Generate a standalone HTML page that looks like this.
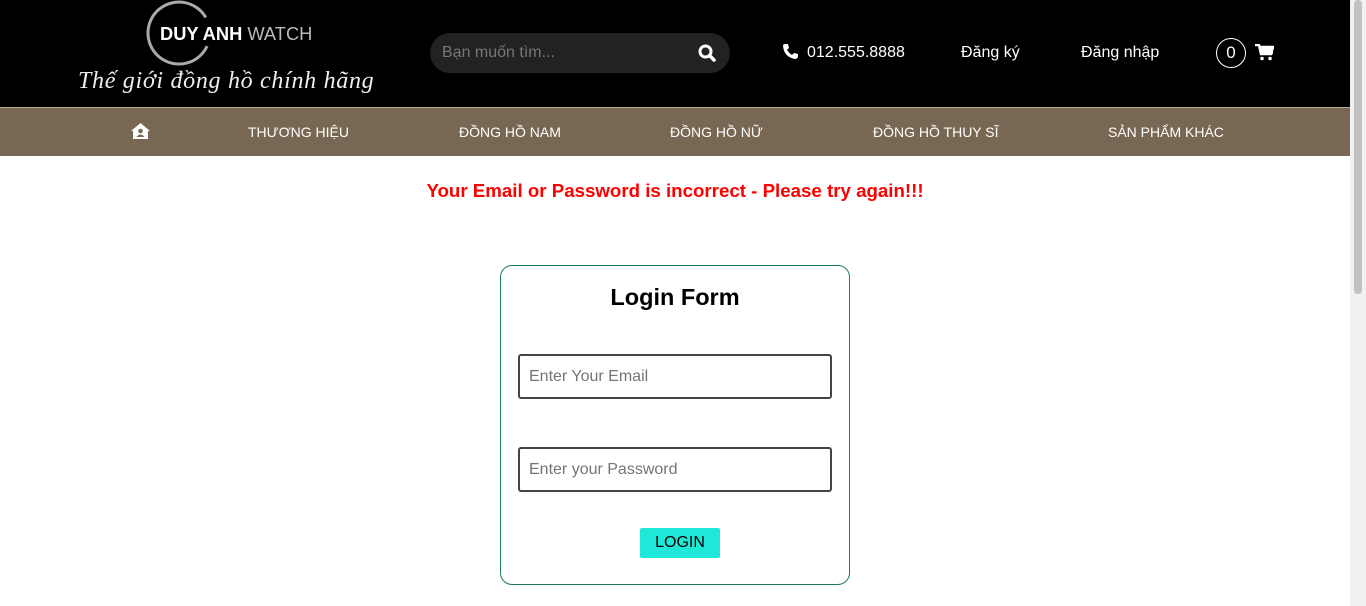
<!DOCTYPE html>
<html><head><meta charset="utf-8"><style>
*{margin:0;padding:0;box-sizing:border-box}
body{width:1366px;height:606px;overflow:hidden;background:#fff;font-family:"Liberation Sans",sans-serif;position:relative}
.hdr{position:absolute;left:0;top:0;width:1350px;height:107px;background:#000}
.nav{position:absolute;left:0;top:107px;width:1350px;height:49px;background:#786752;border-top:1px solid #b8aa98}
.nav span{position:absolute;top:16px;color:#fff;font-size:14px}
.sb{position:absolute;left:1350px;top:0;width:16px;height:606px;background:#f1f1f1}
.sb div{position:absolute;left:4px;top:0;width:8px;height:294px;background:#c1c1c1;border-radius:4px}
.w{position:absolute;color:#fff;font-size:16px}
</style></head><body>
<div class="hdr">
 <svg style="position:absolute;left:145px;top:0" width="70" height="70"><path d="M60.8 17.5 A31 31 0 1 0 62.1 46.1" fill="none" stroke="#aaa" stroke-width="3"/></svg>
 <div style="position:absolute;left:160px;top:23px;color:#fff;font-size:18.3px;font-weight:bold">DUY ANH <span style="font-weight:normal;color:#bbb">WATCH</span></div>
 <div style="position:absolute;left:78px;top:68px;color:#eee;font-family:'Liberation Serif',serif;font-style:italic;font-size:24px;letter-spacing:0.7px">Thế giới đồng hồ chính hãng</div>
 <div style="position:absolute;left:430px;top:33px;width:300px;height:40px;background:#222;border-radius:20px"></div>
 <div style="position:absolute;left:442px;top:44px;color:#777;font-size:16px">Bạn muốn tìm...</div>
 <svg style="position:absolute;left:698px;top:44px" width="18" height="18"><circle cx="7.5" cy="7.5" r="5.5" fill="none" stroke="#fff" stroke-width="3"/><path d="M11.5 11.5 L16 16" stroke="#fff" stroke-width="3.5" stroke-linecap="round"/></svg>
 <svg style="position:absolute;left:782px;top:43px" width="17" height="17" viewBox="0 0 17 17"><path d="M3 1 L6 1 L7 5 L5 7 Q7 10 10 12 L12 10 L16 11 L16 14 Q15 16 13 16 Q2 14 1 3 Q1 1 3 1Z" fill="#fff"/></svg>
 <div class="w" style="left:807px;top:44px">012.555.8888</div>
 <div class="w" style="left:961px;top:44px">Đăng ký</div>
 <div class="w" style="left:1081px;top:44px">Đăng nhập</div>
 <div style="position:absolute;left:1216px;top:38px;width:30px;height:30px;border:1px solid #fff;border-radius:50%;color:#fff;font-size:17px;text-align:center;line-height:28px">0</div>
 <svg style="position:absolute;left:1255px;top:44px" width="19" height="17" viewBox="0 0 19 17"><path d="M0 1 H4 L6 10 H16 L18 3 H5" fill="none" stroke="#fff" stroke-width="2.5"/><rect x="5" y="3" width="13" height="7" fill="#fff"/><circle cx="7" cy="14.5" r="1.8" fill="#fff"/><circle cx="15" cy="14.5" r="1.8" fill="#fff"/></svg>
</div>
<div class="nav">
 <svg style="position:absolute;left:131px;top:15px" width="19" height="16" viewBox="0 0 19 16"><path d="M9.5 0 L19 8 L17 8 L17 16 L2 16 L2 8 L0 8Z" fill="#fff"/><circle cx="9.5" cy="8" r="2.3" fill="#786752"/><path d="M5.5 14 Q9.5 9 13.5 14Z" fill="#786752"/></svg>
 <span style="left:248px">THƯƠNG HIỆU</span>
 <span style="left:459px">ĐỒNG HỒ NAM</span>
 <span style="left:670px">ĐỒNG HỒ NỮ</span>
 <span style="left:873px">ĐỒNG HỒ THUY SĨ</span>
 <span style="left:1108px">SẢN PHẨM KHÁC</span>
</div>
<div style="position:absolute;left:0;width:1350px;top:180px;text-align:center;color:#f00;font-weight:bold;font-size:18.7px">Your Email or Password is incorrect - Please try again!!!</div>
<div style="position:absolute;left:500px;top:265px;width:350px;height:320px;border:1px solid #1a7a66;border-radius:12px"></div>
<div style="position:absolute;left:500px;width:350px;top:284px;text-align:center;font-weight:bold;font-size:23.5px;color:#000">Login Form</div>
<div style="position:absolute;left:518px;top:354px;width:314px;height:45px;border:2px solid #444;border-radius:3px;color:#757575;font-size:16px;padding:12px 9px">Enter Your Email</div>
<div style="position:absolute;left:518px;top:447px;width:314px;height:45px;border:2px solid #444;border-radius:3px;color:#757575;font-size:16px;padding:12px 9px">Enter your Password</div>
<div style="position:absolute;left:640px;top:528px;width:80px;height:30px;background:#20e8d8;border-radius:2px;text-align:center;line-height:30px;font-size:16px;color:#000">LOGIN</div>
<div class="sb"><div></div></div>
</body></html>
